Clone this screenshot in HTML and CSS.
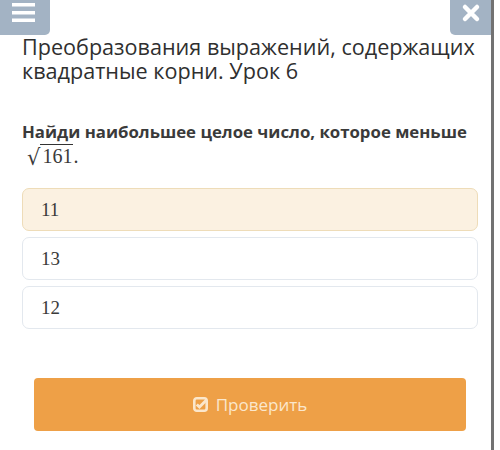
FILE: index.html
```html
<!DOCTYPE html>
<html lang="ru">

<head>
    <meta charset="UTF-8">
    <meta name="viewport" content="width=device-width, initial-scale=1.0">
    <title>Урок 6</title>
    <link rel="stylesheet" href="styles.css">
</head>

<body>
    <div class="page">
        <div class="topbar">
            <button class="menu_btn" type="button">
                <svg width="24" height="22" viewBox="0 0 24 22">
                    <rect x="0" y="3" width="23" height="3.5" fill="#fff"/>
                    <rect x="0" y="11" width="23" height="3.5" fill="#fff"/>
                    <rect x="0" y="18.5" width="23" height="3.5" fill="#fff"/>
                </svg>
            </button>
            <button class="close_btn" type="button">
                <svg width="20" height="20" viewBox="0 0 20 20">
                    <path d="M4 4 L16 16 M16 4 L4 16" stroke="#fff" stroke-width="4.5" stroke-linecap="round"/>
                </svg>
            </button>
        </div>

        <h1 class="lesson_title">Преобразования выражений, содержащих квадратные корни. Урок 6</h1>

        <p class="question">
            Найди наибольшее целое число, которое меньше
            <span class="math"><span class="sqrt_sign">√</span><span class="radicand">161</span>.</span>
        </p>

        <div class="answers">
            <div class="answer selected">11</div>
            <div class="answer">13</div>
            <div class="answer">12</div>
        </div>

        <div class="actions">
            <button class="check_btn" type="button">
                <svg width="15" height="15" viewBox="0 0 15 15">
                    <rect x="1.3" y="1.3" width="12.4" height="12.4" rx="2.5" fill="none" stroke="#fbe7cc" stroke-width="2.6"/>
                    <path d="M3.8 7.4 L6.5 10.1 L13.4 3" fill="none" stroke="#fbe7cc" stroke-width="2.8"/>
                </svg>
                Проверить
            </button>
        </div>
    </div>
</body>

</html>
```

FILE: styles.css
```css
/* Page base */
body,
html {
    margin: 0;
    padding: 0;
    background-color: #ffffff;
    font-family: 'Open Sans', sans-serif;
    color: #333333;
}

.page {
    width: 491px;
    min-height: 450px;
    border-right: 3px solid #727272;
    box-sizing: content-box;
}

.topbar {
    display: flex;
    justify-content: space-between;
    height: 35px;
}

.menu_btn,
.close_btn {
    border: none;
    padding: 0;
    background-color: #a3b3c4;
    display: flex;
    justify-content: center;
    cursor: pointer;
}

.menu_btn {
    width: 50px;
    height: 35px;
    border-bottom-right-radius: 5px;
    align-items: flex-start;
    padding-right: 3px;
}

.close_btn {
    width: 41px;
    height: 35px;
    border-bottom-left-radius: 5px;
    align-items: flex-start;
    padding-top: 3px;
}

.lesson_title {
    margin: 0;
    padding: 0 0 0 22px;
    font-size: 21.6px;
    font-weight: 400;
    line-height: 24px;
    color: #2f2f2f;
}

.question {
    margin: 36px 0 0;
    padding: 0 14px 0 22px;
    font-size: 16.8px;
    font-weight: 700;
    line-height: 25px;
    color: #3a3a3a;
}

.math {
    font-family: 'Liberation Serif', serif;
    font-weight: 400;
    font-size: 20px;
    margin-left: 5px;
    white-space: nowrap;
}

.sqrt_sign {
    font-family: 'DejaVu Serif', serif;
    font-size: 21px;
    display: inline-block;
    transform: translateY(2px) scaleY(1.05);
}

.radicand {
    border-top: 1px solid #333;
    padding: 0 1px 0 2px;
}

.answers {
    display: flex;
    flex-direction: column;
    gap: 6px;
    margin: 19px 13px 0 22px;
}

.answer {
    height: 43px;
    display: flex;
    align-items: center;
    padding-left: 18px;
    border: 1px solid #e3e8ee;
    border-radius: 7px;
    font-family: 'Liberation Serif', serif;
    font-size: 19px;
    color: #3a3a3a;
    box-sizing: border-box;
}

.answer.selected {
    background-color: #fbf1e1;
    border-color: #eedcb8;
}

.actions {
    padding: 49px 25px 0 34px;
}

.check_btn {
    width: 100%;
    height: 53px;
    border: none;
    border-radius: 4px;
    background-color: #eea047;
    color: #fbe7cc;
    font-family: 'Open Sans', sans-serif;
    font-size: 17px;
    display: flex;
    align-items: center;
    justify-content: center;
    gap: 8px;
    cursor: pointer;
}
```
